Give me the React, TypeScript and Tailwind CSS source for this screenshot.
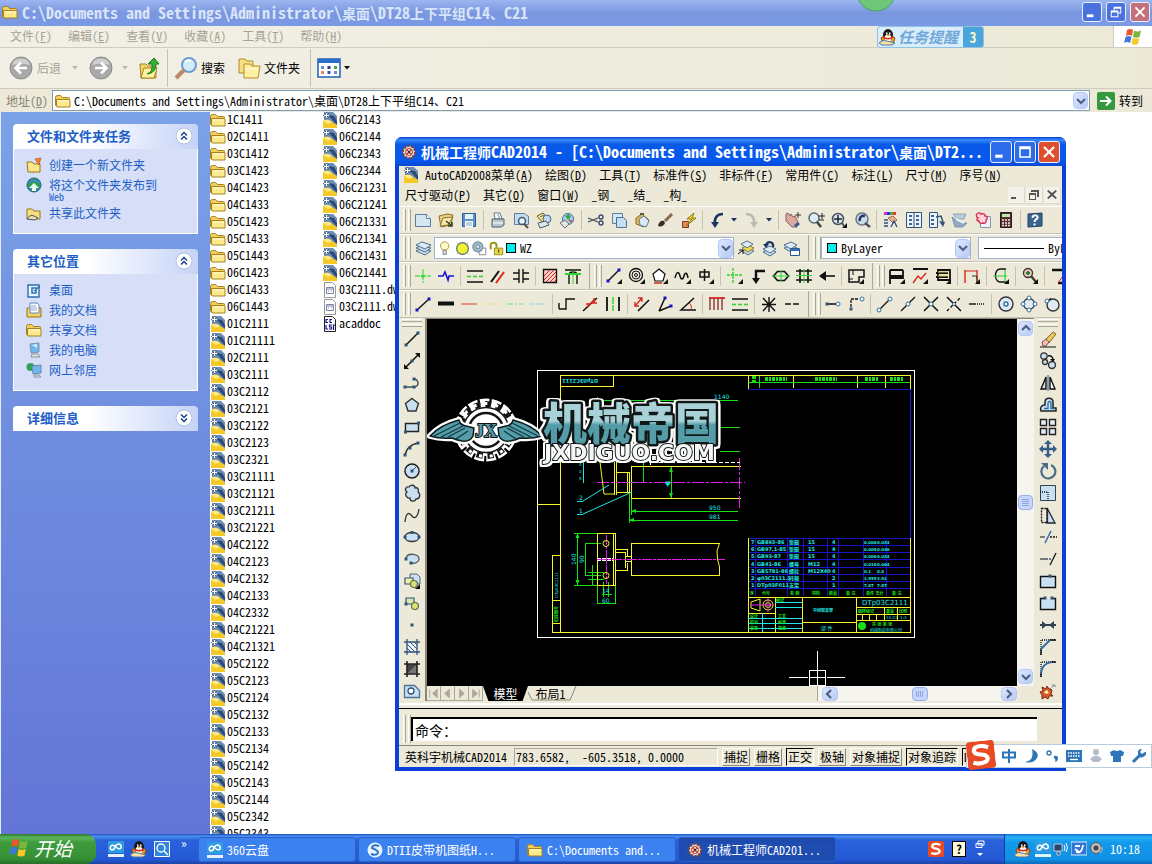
import React from "react";

type Shape = [d: string, stroke: string, fill?: string, width?: number, dash?: string];

const cir = (x: number, y: number, r: number) => `M${x - r} ${y}a${r} ${r} 0 1 0 ${2 * r} 0a${r} ${r} 0 1 0 ${-2 * r} 0`;
const box = (x: number, y: number, w: number, h: number) => `M${x} ${y}h${w}v${h}h${-w}z`;
const K = "#111111";
const N = "#2f5578";
const P = "#c9dff2";
const G = "#2fd42f";
const R = "#d8261c";
const B = "#1414d0";
const CORNER: Shape = ["M17 12v5h-5z", "none", K];
const dot = (x: number, y: number, c = N): Shape => [box(x - 1.5, y - 1.5, 3, 3), "none", c];

const ICONS: Record<string, Shape[]> = {
  new: [["M1.500 3.500h11l4 4v8h-15z", "#5b7f9f", "#d5e6f3"], ["M12.500 3.500v4h4", "#5b7f9f", "#fff"]],
  open: [["M2 5l8-2 6 1-2 10-10 2z", "#8a7430", "#e6cf7a"], ["M3 15l3-8 10-1-5 8z", "#8a7430", "#f6e8a8"], ["M9 10l6 5m0-4v4h-4", "#3b3b28", "none", 1.5]],
  save: [[box(2.5, 2.5, 13, 13), "#2c5f96", "#5d94c8"], [box(5, 3, 8, 5), "none", "#e8f2fb"], [box(5, 10, 8, 6), "none", "#fff"], ["M6 12h6M6 14h6", "#7aa0c4"]],
  print: [["M5 2h6l2 6H6z", "#6a7580", "#fff"], ["M3 8h12v6l-3 2H3z", "#4e5c6c", "#b9c6d3"], ["M4 12h10", "#fff"], ["M8 4h2M9 6h2", "#6e8cc0"]],
  preview: [["M2.500 2.500h10l4 3v8h-14z", "#5b7f9f", "#c3dbee"], [cir(10, 10, 3.5), "#3f5870", "#e9f4ff", 1.5], ["M12 13l4 4", "#5d4a33", "none", 2]],
  publish: [["M2 5l6-3 5 5-6 4z", "#6d5c20", "#ffe36e"], [cir(12, 8, 4), "#4a6a8c", "#bcd7ee"], ["M3 12l8-2 3 4-9 3z", "#4a5a6c", "#dfe7ee"], ["M5 6l4-2", "#3a68c0"]],
  globe: [[cir(10, 8, 5.5), "#3b6d98", "#a9d5e8"], ["M7 5l4-2 2 3-3 3z", "none", "#3ca34f"], ["M2 12l5-3 4 4-4 4z", "#6d6d6d", "#e2e6ea"], ["M11 9l3 2", "#c24a4a", "none", 2]],
  cut: [["M1 7l10 4M1 11l10-4", "#3d4a58", "none", 1.3], [cir(14, 6, 2), "#3a4b70", "none", 1.4], [cir(14, 12, 2), "#3a4b70", "none", 1.4]],
  copy: [[box(2.5, 2.5, 10, 10), "#5b7f9f", "#d7e8f6"], ["M6.500 6.500h7l3 3v7h-10z", "#4d7396", "#c6def2"]],
  paste: [["M3 7l6-4 7 6-5 7-8-3z", "#8d6a1e", "#e8b94b"], ["M6 8l5-3 5 5-3 6-6-2z", "#5b7f9f", "#dbeaf6"], ["M7 3h4", "#555", "none", 2]],
  brush: [["M2 15c1-5 4-6 6-5l1 2c-1 3-4 4-7 3z", "none", "#3b2b20"], ["M9 10l7-7", "#8a6c4d", "none", 3]],
  match: [["M3.500 10.500h6v6h-6z", "#7a3b20", "#ec8455"], ["M15 2l-7 6h5l-6 7 10-8h-4z", "#8d7a14", "#f2d52c"]],
  undo: [["M15 3C9 3 6 7 7 13", "#1c3460", "none", 2.6], ["M3 11l8 0-4 6z", "none", "#1c3460"]],
  redo: [["M3 3C9 3 12 7 11 13", "#bdbab0", "none", 2.6], ["M7 11l8 0-4 6z", "none", "#bdbab0"]],
  pan: [["M2 3l2-1 2 3 1-2 2 3 2-1 3 6-3 5-3 0-6-6z", "#8a5e5e", "#dba9a2"], ["M10 14l4-3 2 2-4 4z", "none", "#3e5d80"], ["M14 1v6M11 4h6", "#333"]],
  zoom: [[cir(7, 7, 5), "#5d6872", "#dcecf8", 1.5], ["M10 11l4 5", "#3f3f44", "none", 2.5], ["M15 2v6M12 5h6M12 9h5", "#222"]],
  zoomwin: [[cir(8, 8, 5.5), "#48535e", "#d8e8f4", 1.5], ["M8 4v8M4 8h8", "#222", "none", 1.5], ["M12 12l2 3", "#48535e", "none", 2], CORNER],
  zoomprev: [[cir(9, 8, 6), "#6a7580", "#c9dcea", 1.5], ["M12 5C8 4 6 7 7 10", "#1c3460", "none", 2.5], ["M12 12l5 4", "#48535e", "none", 2.5]],
  props: [[box(2, 1, 3, 3), "none", "#c3c"], [box(5, 1, 3, 3), "none", "#33d"], [box(8, 1, 3, 3), "none", "#3b3"], [box(11, 1, 3, 3), "none", "#e33"], ["M6 7l5-2 4 4-4 3z", "#a06a50", "#eab48a"], ["M2 9h4M2 12h4M2 15h4M9 16l3-6 3 6", "#2d4d8a", "none", 1.3]],
  grid: [[box(1.5, 1.5, 15, 15), "#33557d", "#eaf3fb"], ["M9 1v16", "#33557d"], ["M4 4h3v2h-3zM4 8h3v2h-3zM4 12h3v2h-3zM11 4h3v2h-3zM11 8h3v2h-3zM11 12h3v2h-3z", "none", "#3f6693"]],
  tools: [[box(1.5, 1.5, 8, 15), "#33557d", "#eaf3fb"], ["M3 4h3v2h-3zM3 8h3v2h-3zM3 12h3v2h-3z", "none", "#3f6693"], ["M8 6l5-1 2 6", "#33557d", "none", 1.5], ["M11 10l6 1-2 5z", "none", "#33557d"]],
  sheet: [["M2 3h13l-2 5H6z", "#8fa3b6", "#b9ccdc"], ["M1 6l8 6 7 0-4 4H4z", "#7e93a6", "#90aabf"], ["M5 8l8 4", "#e9f0f6", "none", 2]],
  markup: [[box(6.5, 5.5, 10, 11), "#8296aa", "#eef4fa"], ["M3 3c1-2 4-1 4 0 2-1 4 0 4 2 3 0 3 3 1 4 1 2-1 4-3 3-2 1-4 0-4-2-2 0-3-2-1-3-2-1-2-3-1-4z", "#d83050", "#ffd5de", 1.4]],
  calc: [[box(3.5, 1.5, 11, 15), "#1e1e1e", "#5b2c2c"], [box(5, 3, 8, 3), "none", "#bce8b0"], ["M5 9h2M8 9h2M11 9h2M5 12h2M8 12h2M11 12h2M5 14.500h2M8 14.500h2M11 14.500h2", "#f0e8e8", "none", 1.6]],
  help: [["M2 3l14-1v13l-14 1z", "#1f3f66", "#3a668f"], ["M6.500 7c0-4 6-3 5 0-1 2-3 1-3 4M8.500 12.500v2", "#fff", "none", 2]],
  layers: [["M2 12l6-3 9 3-6 4z", "#4d6f90", "#c9dcec"], ["M2 9l6-3 9 3-6 4z", "#4d6f90", "#c9dcec"], ["M2 6l6-3 9 3-6 4z", "#4d6f90", "#dfeaf5"]],
  layerSet: [["M5 12l6-3 6 3-6 4z", "#4d6f90", "#c9dcec"], ["M5 9l6-3 6 3-6 4z", "#8a7420", "#f2dd60"], ["M4 5l6-3 6 3-6 4z", "#4d6f90", "#dfeaf5"], ["M1 15l5-4M2 11h4v4", K]],
  layerPrev: [["M3 13l7-3 6 3-6 4z", "#4d6f90", "#c9dcec"], ["M3 10l7-3 6 3-6 4z", "#4d6f90", "#dfeaf5"], ["M13 8C14 3 8 1 6 6", "#1c3460", "none", 2.3], ["M3 5h6l-3 4z", "none", "#1c3460"]],
  layerState: [["M1 9l7-3 6 3-6 4z", "#4d6f90", "#c9dcec"], ["M1 6l7-3 6 3-6 4z", "#4d6f90", "#dfeaf5"], [box(7.5, 9.5, 9, 7), "#2d5a90", "#fff"], [box(8, 10, 8, 2), "none", "#2d6ac0"]],
  bulb: [[cir(8, 6, 5), "#a08c30", "#fff9c8"], ["M6 11h4v5H6z", "#777", "#ddd"]],
  sun: [[cir(9, 9, 7), "#4a6a7a", "#f2f230", 1.4], ["M2 2l2 2M16 2l-2 2M2 16l2-2M16 16l-2-2", "#c8b820"]],
  sunvp: [[box(8.5, 8.5, 8, 8), "#777", "#fff"], [cir(7, 7, 6), "#6f8fa4", "#a8bdcb", 1.4], [cir(7, 7, 2.5), "#5d7d92", "#cfdde6"]],
  lock: [["M2 10V5c0-4 7-4 7 0v3", "#a09418", "none", 2.5], [box(6.5, 8.5, 10, 8), "#8a8014", "#e8d840"], ["M11.500 10v4", "#555", "none", 1.5]],
  cross: [["M9 2v14M1 9h16", "#55dd55", "none", 1.3, "5 1"], dot(9, 9, G)],
  wave: [["M1 9h5l2-4 3 8 1-4h5", B, "none", 1.6]],
  eq: [["M1 4h16M1 15h16", K, "none", 1.4], ["M1 9.500h16", G, "none", 1.4, "4 2"]],
  slash: [["M2 15L10 4", K, "none", 2], ["M7 16l8-11", R, "none", 2]],
  gap: [["M1 6h6M1 12h6M11 6h6M11 12h6M7 2v14M11 2v14", K, "none", 1.4]],
  hatch: [[box(2.5, 2.5, 13, 13), K, "#f7d0cc", 1.3], ["M3 9l6-6M3 13l10-10M5 15l10-10M9 15l6-6M13 15l2-2", R]],
  arch: [["M1 3h16M5 17V8c0-4 8-4 8 0v9", K, "none", 1.4], ["M1 7h16", G, "none", 2], ["M9 4v13", G]],
  line: [["M3 15L15 4", K, "none", 1.4], dot(3, 15, B), dot(15, 4, B)],
  lineC: [["M3 14L14 3", K, "none", 1.4], dot(3, 14, B), dot(14, 3, B), CORNER],
  rings: [[cir(8, 8, 6.5), K, "none", 1.3], [cir(8, 8, 4), K], [cir(8, 8, 1.5), K], CORNER],
  pent: [["M8 2l6 5-2 7H4L2 7z", K, "#fff", 1.2], ["M3 16h8", R, "none", 1.5], CORNER],
  squig: [["M1 11c2-8 4-6 5-2s3 4 4 0 3-4 4 2", K, "none", 1.5], CORNER],
  ctr: [[box(3, 5, 9, 5), K, "none", 1.5], ["M7.500 2v12", K, "none", 1.5], CORNER],
  crossC: [["M7 1v15M1 8h15", G, "none", 1.4, "3 1"], CORNER],
  leader: [["M16 4H7v9", K, "none", 2.4], ["M3 11h8l-4 6z", "none", K]],
  hexa: [["M1.500 9l4-4.500h7l4 4.500-4 4.500h-7z", K, "none", 1.7], ["M0 9h18M9 3v12", G]],
  beam: [["M1 4h16M1 13h16M5 2v14M13 2v14", K, "none", 1.6], ["M9 2v14M1 8.500h16", G]],
  arrowL: [["M17 9H5", K, "none", 1.6], ["M1 9l7-5v10z", "none", K]],
  panel: [["M2 3h15v7h-5v5H2z", K, "none", 1.5], ["M6 3v5M2 12h4", K], CORNER],
  shelf: [["M2 3v14M15 3v9M2 3h13M2 9h13M2 11h13", K, "none", 1.8], CORNER],
  roof: [["M2 2h15", K, "none", 2], ["M2 16l5-7 3 3 5-6", R, "none", 1.4], CORNER],
  book: [["M4 3h12v10H4zM2 6h12M2 10h12M4 13h12", K, "none", 1.8], ["M4 5h10M4 9h10", "#d8c040"], CORNER],
  dimR: [["M2 3v13M14 3v13", R, "none", 1.4], ["M2 4h12", R], ["M9 9h5v7", "#333"], CORNER],
  fork: [["M14 2H8C2 3 2 14 8 15h8", K, "none", 1.3], ["M1 9h14M13 3v12", G, "none", 1.2], CORNER],
  find: [[cir(7, 6, 4.5), "#333", "#f3c0c0", 1.3], ["M5 6h4M7 4v4", "#1a8a2a", "none", 2], ["M10 9l5 6", "#4a3a20", "none", 2.4], CORNER],
  roof2: [["M2 3h15M8 16h9", K, "none", 2.4], ["M8 16l7-10", R]],
  thick: [["M1 8.500h16", K, "none", 4]],
  red: [["M1 9h16", "#e27a70", "none", 1.6]],
  pale: [["M1 9h16", "#ece6b0", "none", 2]],
  gdash: [["M1 9h16", "#9be29b", "none", 1.6, "6 2 2 2"]],
  cdash: [["M1 9h16", "#a9e0d8", "none", 1.4, "4 1"]],
  step: [["M1 14h7V4h9M1 14V8", K, "none", 1.4]],
  brk: [["M2 16L16 3", K, "none", 1.5], ["M6 12l7-7M5 9h4M11 8h5M13 3v5", R, "none", 1.6]],
  bars: [["M3 2v14M15 2v14", K, "none", 1.8], ["M9 2v14", G, "none", 1.5, "7 1"]],
  offs: [["M5 16L16 5", K, "none", 1.6], ["M2 11L9 3M2 7v4h4M5 3h4v4", R, "none", 1.3]],
  ang: [["M3 16L9 3M3 16l12-5", K, "none", 1.5], dot(9, 3, B), dot(15, 11, B)],
  ang2: [["M15 3L2 15h15", K, "none", 1.5], ["M10 8c2 1 3 4 2 7", R]],
  comb: [["M1 3h16", R, "none", 1.8], ["M2 3v12M6 3v12M10 3v12M14 3v12", "#833", "none", 1.4]],
  star: [["M9 2v15M2 9.500h14M3 3l12 13M15 3L3 16", K, "none", 1.4]],
  dash: [["M2 9h6M10 9h6", K, "none", 1.4]],
  seg: [["M4 9h8", K, "none", 1.6], dot(3, 9), [cir(14, 9, 2), "#2f6f98", "#fff"]],
  lshape: [["M4 12V4h8", K, "none", 1.3, "3 1"], dot(4, 14), [cir(15, 4, 2), "#2f6f98", "#fff"]],
  snapE: [["M4 14L13 5", K, "none", 1.3], [cir(3, 15, 2), "#2f6f98", "#fff"], [cir(14, 4, 2), "#2f6f98", "#fff"]],
  snapM: [["M2 16L16 2", K, "none", 1.3], [cir(9, 9, 2), "#2f6f98", "#fff"]],
  snapX: [["M2 16L16 2M2 2l14 14", K, "none", 1.5], [cir(9, 9, 2), "#2f6f98", "#fff"]],
  snapA: [["M2 2l14 14", K, "none", 1.5], ["M2 16L16 2", K, "none", 1.4, "3 2"], [cir(9, 9, 1.5), "#2f6f98", "#fff"]],
  snapD: [["M1 9h7", K, "none", 1.4], ["M9 9h8", K, "none", 1.4, "1 1"]],
  snapC: [[cir(9, 9, 7), "#333", "#dfeaf4", 1.4], [cir(9, 9, 2), "#2f6f98", "#fff", 1.4]],
  snapQ: [[cir(9, 9, 5.5), "#333", "#dfeaf4", 1.3], [cir(9, 3, 2), "#2f6f98", "#fff"], [cir(9, 15, 2), "#2f6f98", "#fff"], [cir(3, 9, 2), "#2f6f98", "#fff"], [cir(15, 9, 2), "#2f6f98", "#fff"]],
  snapT: [[cir(10, 10, 6), "#333", "#dfeaf4", 1.4], ["M2 8l6-5", K], [cir(4, 6, 2), "#2f6f98", "#fff"]],
  dLine: [["M3 15L15 3", K, "none", 1.4], dot(3, 15), dot(15, 3)],
  dRay: [["M2 16L16 2", K, "none", 1.6], ["M1 17v-5l5 5zM17 1v5l-5-5z", "none", K], dot(9, 9)],
  dPoly: [["M2 13h9c6-1 5-8-1-8", "#44505c", "none", 1.4], dot(2, 13), dot(11, 13), dot(11, 5)],
  dPent: [["M9 2.500l6.500 5-2.500 7.500H5L2.500 7.500z", "#333", P, 1.4]],
  dRect: [[box(2.5, 5.5, 13, 8), "#222", P, 1.4], dot(2.5, 14), dot(15.5, 5)],
  dArc: [["M2 16C3 9 8 4 16 3", "#333", "none", 1.4], dot(2, 15), dot(7, 8), dot(15, 3)],
  dCirc: [[cir(9, 9, 7), "#222", P, 1.5], ["M9 9l4-4", N], dot(9, 9)],
  dCloud: [["M4 8C1 6 3 2 6 3c2-3 6-2 6 1 3-1 4 2 3 4 3 2 2 7-2 7-1 3-6 3-6-1-3 1-6-4-3-6z", "#333", P, 1.3]],
  dSpl: [["M2 16C3 6 6 6 9 10s6 0 7-7", "#333", "none", 1.3]],
  dEll: [["M2 9c0-6 14-6 14 0s-14 6-14 0", "#333", P, 1.3], dot(2, 9), dot(16, 9), dot(9, 4.5)],
  dEArc: [["M3 8c2-6 13-4 13 1 0 3-4 5-8 4", "#555", P, 1.3], dot(3, 9), dot(8, 13)],
  dIns: [["M7 2h7l3 3v7H7z", "#567", P], [box(2, 6, 8, 6), N, "#f2f2a0", 1.2], [cir(11, 12, 3.5), "#5c7048", "#dbe27c", 1.2], CORNER],
  dBlk: [[box(3, 4, 8, 6), N, "#d8e8b0", 1.2], [cir(12, 12, 3.5), "#5c7048", "#dbe27c", 1.2], dot(3, 10)],
  dPt: [dot(9, 9)],
  dHat: [[box(4, 4, 10, 10), "none", "#e8f1fa"], ["M4 1v16M14 1v16M1 4h16M1 14h16", N, "none", 1.3], ["M4 6l8 8M4 10l4 4M7 4l7 7M11 4l3 3", N]],
  dGrad: [[box(4, 4, 10, 10), "none", "#777"], ["M4 14V4h10z", "none", "#444"], ["M4 1v16M14 1v16M1 4h16M1 14h16", "#222", "none", 1.6]],
  dReg: [["M1.500 3.500h10l5 5v7h-15z", "#4d7396", P, 1.3], [cir(8, 9, 3), "#2d557a", "#fff", 1.3]],
  mErase: [["M6 10l8-8 3 2-7 9z", "#8a6a2a", "#e8c85c"], ["M3 12l4-3 3 3-3 4H4z", "#8a4a4a", "#f2c0b8"], ["M1 17h16", K]],
  mCopy: [[cir(5, 4, 3.2), "#333", P, 1.3], [cir(6, 10, 2.5), "#333", P, 1.3], [cir(13, 13, 3.5), "#333", P, 1.4], ["M9 4c3-1 5 1 5 4", K, "none", 1.5], ["M11 7h5l-2 3z", "none", K]],
  mMir: [["M7 3v12H2z", K, P, 1.4], ["M9 1v16", N], ["M11 3v12h5z", K, "#fff", 1.4]],
  mOff: [["M2 15h15v-3h-3V6c0-5-8-5-8 0v3c-4 0-5 3-4 6z", "#222", P, 1.5], ["M5 12.500h4V7c0-2 3-2 3 0v5.500h4", "#2f6fa8", "none", 1.3]],
  mArr: [[box(1.5, 1.5, 6, 6) + box(10.5, 1.5, 6, 6) + box(1.5, 10.5, 6, 6) + box(10.5, 10.5, 6, 6), "#222", "#e4eef7", 1.4]],
  mMove: [["M9 3v12M3 9h12", "#355f86", "none", 2.4], ["M9 0l4 4H5zM9 18l4-4H5zM0 9l4-4v8zM18 9l-4-4v8z", "none", "#355f86"]],
  mRot: [["M5 4a7 7 0 1 0 7-1", "#4b6a88", "none", 2.2], ["M2 1h7v7z", "none", "#4b6a88"]],
  mScale: [["M1.500 1.500h15v15h-15z", "#345", P], ["M1 8h8v9", K, "none", 1.3, "1 1"]],
  mStr: [["M8 2l8 15H8z", "#223", P, 1.3], [box(2.5, 2.5, 6, 14), K, "none", 1.3, "2 1"]],
  mTrim: [["M1 9h5", K], ["M11 9h7", K, "none", 1.3, "2 1"], ["M6 15l6-12", "#2f6fa8", "none", 1.5]],
  mExt: [["M1 9h6", K], ["M7 9h5", "#357", "none", 1.3, "2 1"], ["M11 15l6-12", K, "none", 1.3]],
  mBrk1: [[box(1.5, 4.5, 15, 11), K, P, 1.4], dot(11, 4)],
  mBrk2: [[box(2, 5, 14, 10), "none", P], ["M5 4.500H1.500v11h15v-11H13", K, "none", 1.4], dot(6, 4), dot(13, 4)],
  mJoin: [["M1 9h16", K, "none", 1.6], ["M3 5l5 4-5 4zM15 5l-5 4 5 4z", "none", "#29455f"]],
  mCham: [["M2 17V2h15", K, "none", 1.3, "1 1"], ["M2 17v-6M11 2h6", K, "none", 1.4], ["M2 11l9-9", "#2f6fa8", "none", 2]],
  mFil: [["M2 17V2h15", K, "none", 1.3, "1 1"], ["M2 17v-5M12 2h5", K, "none", 1.4], ["M2 13C3 6 6 3 13 2", "#2f6fa8", "none", 2]],
  mExp: [["M1 10l3-1-1-4 4 2 1-3 2 3 3 1-1 4 2 2-4 0-1 3-3-2-3 2 0-4z", "#7a2a10", "#d8582c"], ["M5 10l3-2 2 3-3 1z", "none", "#fff2a0"], ["M11 7l5-4M13 3h3v3", "#777", "none", 1, "2 1"]],
};

function Icon({ name, className = "h-[18px] w-[18px]" }: { name: string; className?: string }) {
  return (
    <svg viewBox="0 0 18 18" className={className + " shrink-0"} aria-hidden="true">
      {ICONS[name].map(([d, stroke, fill = "none", width = 1, dash], i) => (
        <path key={i} d={d} stroke={stroke} fill={fill} strokeWidth={width} strokeDasharray={dash} />
      ))}
    </svg>
  );
}

/* Bold caption whose Chinese runs are set a size smaller than its Latin runs. */
function Caption({ text }: { text: string }) {
  return (
    <span className="whitespace-pre text-[16px] leading-6 font-bold">
      {text.split(/([\u3001\u4e00-\u9fff]+)/).map((part, i) => (i % 2 ? <span key={i} className="text-[14px]">{part}</span> : part))}
    </span>
  );
}

function Label({ text, hot }: { text: string; hot: string }) {
  return <>{text}({<u>{hot}</u>})</>;
}

function Folder({ className = "h-4 w-4" }: { className?: string }) {
  return (
    <svg viewBox="0 0 16 16" className={className + " shrink-0"} aria-hidden="true">
      <path d="M.500 4.500q0-2 2-2h3l2 2h6q1 0 1 1V13H2q-1.500 0-1.500-1z" fill="#f0cf5c" stroke="#a8821e" />
      <path d="M1.500 6.500H14q1 0 1 1V14H3q-1.500 0-1.500-1z" fill="#fbe98c" stroke="#a8821e" />
      <path d="M3 8h11" stroke="#fffbd8" />
    </svg>
  );
}

function Drawing() {
  return (
    <svg viewBox="0 0 16 16" className="h-4 w-4 shrink-0" aria-hidden="true">
      <path d="M2 0h9l4 4v12H2z" fill="#6d8db4" />
      <path d="M6 3l6 1 3 5v4z" fill="#2b4a78" />
      <path d="M1 9q5-3 9 1l5 3v3H1z" fill="#f5c928" />
      <path d="M1 9q5-3 9 1l-4 2z" fill="#fdea80" />
      <path d="M1 3.500h7M4.500 0v7M2 1l5 5M7 1L2 6" stroke="#4a6488" />
      <path d="M2 3.500h5M4.500 1v5" stroke="#fff" />
    </svg>
  );
}

function Doc({ lsp }: { lsp?: boolean }) {
  return (
    <svg viewBox="0 0 16 16" className="h-4 w-4 shrink-0" aria-hidden="true">
      <path d="M2.500.500h8l3 3v12h-11z" fill="#fff" stroke={lsp ? "#222" : "#999"} />
      {lsp ? (
        <path d="M6 3.500H4v3h2M10 3.500H8v3h2M4 9v4h2M10 9H7.500v2h2v2H7M11.500 14V9H13" fill="none" stroke="#15158a" strokeWidth="1.200" />
      ) : (
        <path d="M4.500 5.500h7v6h-7zM5 7h6M6 9h1M9 9h1" fill="none" stroke="#7f82a8" />
      )}
    </svg>
  );
}

function Gear({ className = "h-4 w-4" }: { className?: string }) {
  return (
    <svg viewBox="0 0 16 16" className={className + " shrink-0"} aria-hidden="true">
      <circle cx="8" cy="8" r="6" fill="#d8d2d2" stroke="#6e4a4a" strokeWidth="3" strokeDasharray="2.200 1.500" />
      <circle cx="8" cy="8" r="4.500" fill="#d84838" stroke="#eee" />
      <path d="M5 8h6M8 5v6" stroke="#fff" strokeWidth="1.500" />
      <circle cx="8" cy="8" r="1.500" fill="#333" />
    </svg>
  );
}

function Penguin() {
  return (
    <svg viewBox="0 0 20 18" className="h-[18px] w-5 shrink-0" aria-hidden="true">
      <path d="M3 10l7-5 7 5-2 6H5z" fill="#e8a020" stroke="#7a5010" />
      <ellipse cx="10" cy="7" rx="5" ry="6" fill="#181818" />
      <ellipse cx="10" cy="10" rx="3.500" ry="3.500" fill="#fff" />
      <path d="M5 8q5 4 10 0v2q-5 3-10 0z" fill="#e02818" />
      <path d="M8 4.500h1.500v2H8zM11 4.500h1.500v2H11z" fill="#fff" />
      <path d="M8 7h4l-2 1.500z" fill="#f8b020" />
      <path d="M1 15q4-4 8-2l8 2-3 2H4z" fill="#f8e0a0" stroke="#487ab0" />
    </svg>
  );
}

function Flag({ className }: { className: string }) {
  return (
    <svg viewBox="0 0 20 18" className={className} aria-hidden="true">
      <path d="M4 2q3-2 6 0L9 8Q6 6 3 8z" fill="#e8582c" />
      <path d="M11 2.500q3 2 7 0L16.500 9q-3 1.500-6.500 0z" fill="#78b83c" />
      <path d="M2.500 9q3-2 6 0L7 15q-3-2-6 0z" fill="#3f78d8" />
      <path d="M9.700 10q3 1.500 6.500 0L15 16q-3 1.500-6.500 0z" fill="#f8c828" />
    </svg>
  );
}

function Cloud() {
  return (
    <svg viewBox="0 0 16 16" className="h-4 w-4 shrink-0" aria-hidden="true">
      <path d="M0 0h16v12H0z" fill="#2f9be0" />
      <path d="M0 13h16v3H0z" fill="#e4f2fc" />
      <path d="M4 9q-3-1-1-4 2-2 5 1 3 3 5 1 1-3-2-4-3 0-4 3-1 3-3 3z" fill="none" stroke="#fff" strokeWidth="1.500" />
    </svg>
  );
}

function SBadge({ className = "h-4 w-4" }: { className?: string }) {
  return (
    <svg viewBox="0 0 16 16" className={className + " shrink-0"} aria-hidden="true">
      <rect width="16" height="16" rx="2" fill="#e84a24" />
      <path d="M12.500 4Q8 2 5 3.500 3 6 6 7.200l4 1Q13 10 10.500 12 7 13.500 3.200 12" fill="none" stroke="#fff" strokeWidth="2.400" />
    </svg>
  );
}

function Caret({ color = "#111" }: { color?: string }) {
  return <svg viewBox="0 0 6 4" className="h-1 w-1.5 shrink-0" aria-hidden="true"><path d="M0 0h6L3 3.500z" fill={color} /></svg>;
}

const CHEVRON: Record<string, string> = { up: "M2 7l4-4 4 4", down: "M2 4l4 4 4-4", left: "M7 2L3 6l4 4", right: "M4 2l4 4-4 4" };

function Arrow({ dir, className = "h-[15px] w-[15px]" }: { dir: string; className?: string }) {
  return (
    <button aria-label={"Scroll " + dir} className={className + " flex shrink-0 items-center justify-center rounded-sm border border-[#b4c8f6] bg-gradient-to-br from-[#dce6fe] to-[#b9cbf6]"}>
      <svg viewBox="0 0 12 12" className="h-3 w-3" aria-hidden="true"><path d={CHEVRON[dir]} fill="none" stroke="#4d6185" strokeWidth="2.200" /></svg>
    </button>
  );
}

const CAPTION_PATHS: Record<string, string> = {
  min: "M4 12h7v3H4z",
  max: "M4 4h11v11H4zm1.500 3v6.500h8V7z",
  restore: "M7 4h8v7h-3v4H4V8h3zm1 2v2h4v2h2V6zM5 10v4h6v-4z",
  close: "M4 5.400L5.400 4 9.500 8.100 13.600 4 15 5.400 10.900 9.500 15 13.600 13.600 15 9.500 10.900 5.400 15 4 13.600 8.100 9.500z",
};

function CaptionButton({ kind, className }: { kind: string; className: string }) {
  return (
    <button aria-label={kind} className={className + " shrink-0 rounded-[3px] border border-[#e8eefc]"}>
      <svg viewBox="0 0 19 19" className="h-full w-full" aria-hidden="true"><path d={CAPTION_PATHS[kind]} fill="#fff" fillRule="evenodd" /></svg>
    </button>
  );
}

const FOLDERS = "1C1411 02C1411 03C1412 03C1423 04C1423 04C1433 05C1423 05C1433 05C1443 06C1423 06C1433 06C1443".split(" ");
const DRAWINGS = "01C2111 01C21111 02C2111 03C2111 03C2112 03C2121 03C2122 03C2123 03C2321 03C21111 03C21121 03C21211 03C21221 04C2122 04C2123 04C2132 04C2133 04C2332 04C21221 04C21321 05C2122 05C2123 05C2124 05C2132 05C2133 05C2134 05C2142 05C2143 05C2144 05C2342 05C2343 06C2143 06C2144 06C2343 06C2344 06C21231 06C21241 06C21331 06C21341 06C21431 06C21441".split(" ");

function FileItem({ icon, name }: { icon: React.ReactNode; name: string }) {
  return <li className="h-[17px]"><button className="flex items-start gap-px whitespace-nowrap leading-[14px]">{icon}{name}</button></li>;
}

function FileList() {
  return (
    <ul className="grid min-w-0 flex-1 auto-cols-[112px] grid-flow-col grid-rows-[repeat(43,17px)] content-start overflow-hidden bg-white">
      {FOLDERS.map((f) => <FileItem key={f} icon={<Folder />} name={f} />)}
      {DRAWINGS.map((f) => <FileItem key={f} icon={<Drawing />} name={f} />)}
      <FileItem icon={<Doc />} name="03C2111.dwl" />
      <FileItem icon={<Doc />} name="03C2111.dwl2" />
      <FileItem icon={<Doc lsp />} name="acaddoc" />
    </ul>
  );
}

function Panel({ title, open, children }: { title: string; open?: boolean; children?: React.ReactNode }) {
  return (
    <section>
      <button className="flex h-[25px] w-full items-center justify-between rounded-t-[4px] bg-gradient-to-r from-white from-40% to-[#c6d3f7] pr-1 pb-px pl-3.5 text-[13px] font-bold text-[#215dc6]">
        {title}
        <svg viewBox="0 0 20 20" className="h-5 w-5" aria-hidden="true">
          <circle cx="10" cy="10" r="8" fill="#fff" stroke="#b0bfe0" />
          <path d={open ? "M7 9.500l3-3 3 3M7 13.500l3-3 3 3" : "M7 6.500l3 3 3-3M7 10.500l3 3 3-3"} fill="none" stroke="#1a3f90" strokeWidth="1.500" />
        </svg>
      </button>
      {open && <div className="border border-t-0 border-white bg-[#d6dff7] pl-3 text-[#215dc6]">{children}</div>}
    </section>
  );
}

const PLACES: Record<string, React.ReactNode> = {
  desk: <><path d="M2 3h11v12H2z" fill="#eaf4fc" stroke="#2a6fb0" strokeWidth="1.400" /><path d="M6 6h4v5H6zM8 9l6-5" fill="none" stroke="#2a6fb0" strokeWidth="1.500" /></>,
  docs: <><path d="M1 6h14v9H1z" fill="#f2d368" stroke="#9a7416" /><path d="M4 1h7l2 2v8H4z" fill="#fff" stroke="#5c88b8" /><path d="M5 4h5M5 6h6M5 8h6" stroke="#88a8d0" /></>,
  pc: <><path d="M4 2l9-1v9l-8 1z" fill="#6fb8ee" stroke="#7d93aa" /><path d="M6 3l5-1v4z" fill="#d5eefd" /><path d="M6 12h6l2 3H5z" fill="#dfe4ea" stroke="#8a94a0" /></>,
  net: <><circle cx="4.500" cy="5" r="4" fill="#34a060" /><path d="M6 4l9-1v8l-8 1z" fill="#6fb8ee" stroke="#6d88a8" /><path d="M8 13h5l2 2H8z" fill="#dfe4ea" stroke="#8a94a0" /></>,
  web: <><circle cx="8" cy="8" r="7" fill="#2f9c50" stroke="#1f5f90" /><path d="M2 6q6-5 12 0M3 12q5-2 10 0" fill="none" stroke="#3b86d0" strokeWidth="2" /><path d="M3 11l5-5 5 5h-3v3H6v-3z" fill="#e8fbe8" /></>,
  share: <><path d="M1 4h5l2 2h6v8H1z" fill="#f6df80" stroke="#9a7416" /><path d="M1 14q3-5 7-3l4 2-3 2z" fill="#f8d8b0" stroke="#3a5a70" /></>,
  create: <><path d="M1 5h5l2 2h6v8H2z" fill="#fbe98c" stroke="#9a7416" /><path d="M9 2l6-1-2 7z" fill="#f08030" stroke="#b05010" strokeWidth=".600" /></>,
};

function Place({ icon, children }: { icon?: string; children: React.ReactNode }) {
  return (
    <li>
      <a href="#" className="flex items-start gap-[7px]">
        {icon ? <svg viewBox="0 0 16 16" className="mt-0.5 h-4 w-4 shrink-0" aria-hidden="true">{PLACES[icon]}</svg> : <Folder className="mt-0.5 h-4 w-4" />}
        <span className="py-0.5">{children}</span>
      </a>
    </li>
  );
}

function Sidebar() {
  return (
    <aside className="flex w-[210px] shrink-0 flex-col gap-[15px] overflow-hidden border-l border-[#e4ebfb] bg-gradient-to-b from-[#7ba2e7] to-[#6375d6] py-3 pr-3 pl-3">
      <Panel title="文件和文件夹任务" open>
        <ul className="flex flex-col pt-1.5 pb-2.5 leading-4">
          <Place icon="create">创建一个新文件夹</Place>
          <Place icon="web">将这个文件夹发布到<br /><span className="block text-[10px] leading-2">Web</span></Place>
          <Place icon="share">共享此文件夹</Place>
        </ul>
      </Panel>
      <Panel title="其它位置" open>
        <ul className="flex flex-col pt-1.5 pb-2.5 leading-4">
          <Place icon="desk">桌面</Place>
          <Place icon="docs">我的文档</Place>
          <Place>共享文档</Place>
          <Place icon="pc">我的电脑</Place>
          <Place icon="net">网上邻居</Place>
        </ul>
      </Panel>
      <Panel title="详细信息" />
    </aside>
  );
}

function Round({ flip }: { flip?: boolean }) {
  return (
    <svg viewBox="0 0 24 24" className="h-6 w-6 shrink-0" aria-hidden="true">
      <circle cx="12" cy="12" r="11" fill="#a9a9a9" stroke="#8c8c8c" />
      <path d="M3 9a9.500 9.500 0 0 1 18 0q-9-3-18 0z" fill="#cfcfcf" />
      <path d={flip ? "M6 12h11M12 6.500l5.500 5.500-5.500 5.500" : "M18 12H7M12 6.500L6.500 12l5.500 5.500"} fill="none" stroke="#fff" strokeWidth="2.600" />
    </svg>
  );
}

const EXPLORER_MENU = [["文件", "F"], ["编辑", "E"], ["查看", "V"], ["收藏", "A"], ["工具", "T"], ["帮助", "H"]];

function ExplorerChrome() {
  return (
    <header className="relative shrink-0 bg-[#ece9d8]">
      <div className="flex h-[26px] items-center gap-1 bg-gradient-to-b from-[#9cb6f0] via-[#7a96df] to-[#7b9ae6] px-0.5 pb-0.5 text-[#d8e4f8]">
        <Folder />
        <Caption text={"C:\\Documents and Settings\\Administrator\\桌面\\DT28上下平组C14、C21"} />
        <span className="ml-auto flex gap-1">
          <CaptionButton kind="min" className="h-5 w-5 bg-[#4a72de]" />
          <CaptionButton kind="restore" className="h-5 w-5 bg-[#4a72de]" />
          <CaptionButton kind="close" className="h-5 w-5 bg-[#c4707a]" />
        </span>
      </div>
      <div className="flex h-[22px] border-b border-[#d0cdbd] bg-gradient-to-r from-[#f2f0e6] to-[#ece9d8]">
        <nav className="flex flex-1 items-center gap-4 pb-px pl-2.5 text-[#a5a294]">
          {EXPLORER_MENU.map(([t, h]) => <button key={h}><Label text={t} hot={h} /></button>)}
        </nav>
        <div className="flex w-[39px] items-center justify-center border-l border-[#d0cdbd] bg-white"><Flag className="h-[18px] w-5" /></div>
      </div>
      <div className="flex h-[41px] items-center border-b border-[#cfccbc] bg-gradient-to-r from-[#f2f0e6] to-[#ece9d8] pl-[9px]">
        <button className="flex items-center gap-1 text-[#a5a294]"><Round />后退</button>
        <span className="flex w-[28px] justify-center"><Caret color="#bbb8aa" /></span>
        <button aria-label="前进"><Round flip /></button>
        <span className="flex w-6 justify-center"><Caret color="#bbb8aa" /></span>
        <button aria-label="向上" className="w-[30px]">
          <svg viewBox="0 0 24 24" className="h-6 w-6"><path d="M3 8h6l2 2h8v12H4z" fill="#f3d868" stroke="#a8821e" /><path d="M4 22l3-10h13l-3 10z" fill="#fdf0a0" stroke="#a8821e" /><path d="M10 18q6-2 5-10h-4l6-6 5 6h-3q0 9-9 10z" fill="#35b035" stroke="#1a7a1a" /></svg>
        </button>
        <span className="h-[38px] w-[7px] border-l border-[#c5c2b2]" />
        <button className="flex items-center gap-[3px]">
          <svg viewBox="0 0 24 24" className="h-6 w-6"><circle cx="15" cy="9" r="7" fill="#d3ebfc" stroke="#6c9ccc" strokeWidth="2" /><path d="M11 6q3-3 6-1" fill="none" stroke="#fff" strokeWidth="2" /><path d="M10 14l-8 8" stroke="#b88a68" strokeWidth="4" /></svg>
          搜索
        </button>
        <button className="ml-3 flex items-center gap-[3px]">
          <svg viewBox="0 0 24 24" className="h-6 w-6"><path d="M2 3h6l2 2h6v12H2z" fill="#f6df80" stroke="#b08c2c" /><path d="M7 8h6l2 2h8l-2 12H7z" fill="#fdf0a0" stroke="#b08c2c" /><path d="M8 13h13" stroke="#fffbe0" /></svg>
          文件夹
        </button>
        <span className="ml-[10px] h-[38px] w-[7px] border-l border-[#c5c2b2]" />
        <button className="flex items-center gap-[3px]" aria-label="查看方式">
          <svg viewBox="0 0 24 20" className="h-5 w-6"><path d="M1 1h22v18H1z" fill="#fff" stroke="#1e5fb4" strokeWidth="1.500" /><path d="M1 1h22v4H1z" fill="#2d6fc8" /><path d="M4 8h3v3H4zM17 13h3v3h-3z" fill="#6a8ad0" /><path d="M10.500 8h3v3h-3z" fill="#303890" /><path d="M17 8h3v3h-3z" fill="#48a048" /><path d="M4 13h3v3H4z" fill="#e08850" /><path d="M10.500 13h3v3h-3z" fill="#2858c0" /></svg>
          <Caret />
        </button>
      </div>
      <div className="flex h-[23px] items-center pl-1.5">
        <label htmlFor="address" className="w-[46px] text-[#8a8778]"><Label text="地址" hot="D" /></label>
        <div className="flex h-[21px] flex-1 items-center gap-[3px] border border-[#7f9db9] bg-white pl-0.5">
          <Folder />
          <input id="address" defaultValue={"C:\\Documents and Settings\\Administrator\\桌面\\DT28上下平组C14、C21"} className="min-w-0 flex-1 bg-transparent outline-none" />
          <Arrow dir="down" className="mr-px h-[17px] w-[15px]" />
        </div>
        <button className="ml-[7px] flex w-[55px] items-center gap-1">
          <svg viewBox="0 0 18 18" className="h-[18px] w-[18px]"><rect width="18" height="18" rx="2" fill="#36983c" /><path d="M3 9h10M9 4.500L13.500 9 9 13.500" fill="none" stroke="#fff" strokeWidth="2" /></svg>
          转到
        </button>
      </div>
      <div className="absolute top-[26px] left-[877px] flex h-[22px] w-[107px] items-center overflow-hidden rounded-[3px] border border-[#8fc0e0] bg-[#d9edfa] text-[15px] font-bold text-[#6fa8d8] italic">
        <Penguin /><span className="flex-1 whitespace-nowrap leading-5">任务提醒</span>
        <span className="w-5 bg-[#4ba5dc] text-center text-[14px] leading-5 text-[#f6f6c8] not-italic">3</span>
      </div>
      <svg viewBox="0 0 40 12" className="absolute top-0 left-[856px] h-3 w-10" aria-hidden="true"><circle cx="20" cy="-8" r="19" fill="#6cc878" stroke="#4aa068" /></svg>
    </header>
  );
}

const Grip = () => <span className="my-0.5 ml-1 flex w-2 shrink-0 gap-0.5 self-stretch"><i className="w-[3px] border-r border-l border-r-[#aca899] border-l-white" /><i className="w-[3px] border-r border-l border-r-[#aca899] border-l-white" /></span>;
const Break = () => <><span className="w-1.5 shrink-0 self-stretch border-r border-[#aca899]" /><Grip /></>;

/* "|" separates groups, "/" starts a new bar, "v" is a drop-down mark. */
function Tools({ items }: { items: string }) {
  return (
    <>
      {items.split(" ").map((n, i) =>
        n === "|" ? <span key={i} className="flex h-5 w-1.5 shrink-0 justify-center"><i className="w-px bg-[#c5c2b2]" /></span>
        : n === "/" ? <Break key={i} />
        : n === "v" ? <span key={i} className="flex w-3 shrink-0 justify-center"><Caret color="#1c3460" /></span>
        : <button key={i} aria-label={n} className="flex w-[23px] shrink-0 justify-center"><Icon name={n} /></button>,
      )}
    </>
  );
}

const Bar = ({ children }: { children: React.ReactNode }) => <div className="flex h-7 shrink-0 items-center overflow-hidden border-t border-b border-t-white border-b-[#c5c2b2]"><Grip />{children}</div>;

function Select({ value, name, className, children }: { value: string; name: string; className: string; children?: React.ReactNode }) {
  return (
    <div className={className + " flex h-[22px] shrink-0 items-center border border-[#9fb4cc] bg-white pl-[3px]"}>
      {children}
      <select aria-label={name} className="min-w-0 flex-1 appearance-none bg-transparent pl-1 outline-none"><option>{value}</option></select>
      <Arrow dir="down" className="h-[19px] w-[15px]" />
    </div>
  );
}

const CAD_MENU = [["AutoCAD2008菜单", "A"], ["绘图", "D"], ["工具", "T"], ["标准件", "S"], ["非标件", "F"], ["常用件", "C"], ["标注", "L"], ["尺寸", "M"], ["序号", "N"]];
const CAD_MENU2 = [["尺寸驱动", "P"], ["其它", "O"], ["窗口", "W"]];
const DRAW_TOOLS = "dLine dRay dPoly dPent dRect dArc dCirc dCloud dSpl dEll dEArc dIns dBlk dPt dHat dGrad dReg".split(" ");
const MODIFY_TOOLS = "mErase mCopy mMir mOff mArr mMove mRot mScale mStr mTrim mExt mBrk1 mBrk2 mJoin mCham mFil mExp".split(" ");

const SideTools = ({ items, className }: { items: string[]; className: string }) => (
  <div className={className + " flex shrink-0 flex-col items-center overflow-hidden"}>
    <span className="my-px flex h-2 w-5 shrink-0 flex-col gap-0.5"><i className="h-[3px] border-t border-b border-t-white border-b-[#aca899]" /><i className="h-[3px] border-t border-b border-t-white border-b-[#aca899]" /></span>
    {items.map((n) => <button key={n} aria-label={n} className="flex h-[22px] shrink-0 items-center"><Icon name={n} /></button>)}
  </div>
);

const PARTS = [
  ["7", "GB893-86", "垫圈", "15", "4", "0.006", "0.024"],
  ["6", "GB97.1-85", "垫圈", "15", "4", "0.009", "0.036"],
  ["5", "GB93-87", "垫圈", "15", "4", "0.006", "0.024"],
  ["4", "GB41-86", "螺母", "M12", "4", "0.016", "0.064"],
  ["3", "GB5781-86", "螺栓", "M12X40", "4", "0.1", "0.4"],
  ["2", "φ03C2111.1", "托辊", "", "2", "1.955", "3.91"],
  ["1", "DTp03F011", "支架", "", "1", "7.87", "7.87"],
];
const PART_X = [751, 757, 789, 808, 832, 864, 877];

function Model() {
  const C = "#20e8e8";
  const Y = "#f5f52a";
  const g = "#18e018";
  const M = "#e020e0";
  return (
    <svg viewBox="427 319 590 367" preserveAspectRatio="xMinYMin slice" className="block h-full w-full" fill="none" fontFamily="'DejaVu Sans', 'Noto Sans CJK SC', sans-serif" fontSize="6" aria-hidden="true">
      <g shapeRendering="crispEdges">
        <path d="M537.500 370.500h377v267h-377z" stroke="#fff" />
        <path d="M560.500 375.500h350v257h-350zM560 386.500h53v-11M537 504.500h23M560 555.500h-8v77h8M552 600.500h8M552 623.500h8M748.500 375v14h162M793.500 375v13M857.500 375v13M885.500 375v13" stroke={Y} />
        <path d="M748 382.500h162M759.500 376v12" stroke={g} />
        <path d="M748 389.500h162v148M749 538.500h161M749 545.500h161M749 552.500h161M749 559.500h161M749 567.500h161M749 574.500h161M749 581.500h161M749 588.500h161M755.500 538v58M787.500 538v58M803.500 538v58M827.500 538v58M838.500 538v58M863.500 538v58M886.500 538v58" stroke="#1616c8" />
        <path d="M748.500 538v94M748 597.500h162M775.500 597v35M802.500 597v35M856.500 597v35M802 622.500h54M856 607.500h54M856 614.500h54M856 620.500h54M748 613.500h27M862.500 614v6M869.500 614v6M876.500 614v6M884.500 608v12M897.500 608v12" stroke={Y} />
        <path d="M775 602.500h27M775 607.500h27M748 618.500h54M748 623.500h54M748 628.500h54M762.500 613v19" stroke={C} />
        <path d="M753.500 376v6M765 379h22M815 379h22M865 379h14M890 379h14" stroke={g} strokeWidth="4" strokeDasharray="3 1 2 1" />
        <path d="M597 400.500h141M740 427.500h-20M720 451.500h20M597.500 397v15M671.500 467v31M631 511.500h107M629 520.500h109M631.500 497v18M629.500 493v30M643.500 462v20M616 482.500h27" stroke={g} />
        <path d="M631.500 466.500h109M631.500 466v32h109M614.500 462v33M616.500 462v33M616 472.500h13v20h-13M627.500 472v20" stroke={Y} />
        <path d="M597 482.500h148M739.500 458v50" stroke={M} strokeDasharray="12 2 3 2" />
        <path d="M650 465v-3h90" stroke="#fff" strokeDasharray="4 2" />
        <path d="M583.500 461v22M577 501.500h6M577 514.500h6" stroke={C} />
        <path d="M574 533.500h23M574 585.500h23M577.500 533v52M585.500 543v32M585 543.500h16M585 575.500h16M597.500 586v18M615.500 586v18M597 603.500h18M602 594.500h10M592.500 565v20M588 572.500h16M588 579.500h16M603.500 582v15M608.500 582v15" stroke={g} />
        <path d="M597.500 533.500h18v52h-18zM613.500 534v51M631.500 543.500h88M631.500 543v32h88M615 549.500h12v7M615 570.500h12v-8M615 552.500h10v15M625 556.500h6v5h-6" stroke={Y} />
        <path d="M597 559.500h128M606.500 535v49" stroke={M} strokeDasharray="10 1 3 1" />
        <path d="M597 558.500h16M597 560.500h16" stroke="#fff" strokeDasharray="4 1" />
      </g>
      <path d="M719.500 543q-4 8-2 16 3 8 2 16" stroke={Y} />
      <path d="M600 462l4 32h11" stroke={Y} />
      <path d="M583 501l26-16M583 514l49-22" stroke={C} />
      <circle cx="606" cy="543.500" r="3" stroke={Y} /><circle cx="606" cy="575.500" r="3" stroke={Y} />
      <path d="M631 511l5-2v4zM629 520l5-2v4zM671 467l-2 5h4zM671 498l-2-5h4zM577.500 533l-2 5h4zM577.500 585l-2-5h4z" fill={g} />
      <path d="M751 602l9-3v12l-9-3z" stroke={Y} /><circle cx="768" cy="605" r="5" stroke={Y} /><circle cx="768" cy="605" r="2.500" stroke={Y} />
      <path d="M750 605h24M768 598v14" stroke={M} />
      <g fill={C}>
        {PARTS.map((row, r) => row.map((cell, c) => cell && <text key={r + "-" + c} x={PART_X[c]} y={544 + r * 7.2} fontSize={c > 4 ? 4 : 5} fontWeight="bold">{cell}</text>))}
        <text x="714" y="399">1140</text><text x="709" y="510">950</text><text x="709" y="519">981</text><text x="665" y="485" fontSize="7" fontWeight="bold">φ</text>
        <text x="579" y="500">2</text><text x="579" y="513">1</text>
        <text x="602" y="593">14</text><text x="602" y="603">60</text>
        <text transform="translate(576 565) rotate(-90)">140</text><text transform="translate(584 563) rotate(-90)">90</text>
        <text transform="translate(558 598) rotate(-90)" fontSize="4">DTp03C2111</text>
        <text transform="rotate(180 583 381)" x="568" y="383" fontSize="5" fontWeight="bold">DTp03C2111</text>
        <text x="813" y="612" fontSize="4" fontWeight="bold">中间辊支架</text><text x="821" y="630" fontSize="5">部 件</text>
        <text x="862" y="605" fontSize="7">DTp03C2111</text><text x="886" y="619" fontSize="4">14.31</text><text x="900" y="619" fontSize="4">1:3</text>
        <text x="870" y="632" fontSize="4">机械制造有限公司</text>
        <text x="579" y="466" fontSize="4">4</text><text x="579" y="473" fontSize="4">3</text><text x="579" y="480" fontSize="4">5</text>
      </g>
      <g fill={g} fontSize="4" fontWeight="bold">
        <text x="750" y="595">序</text><text x="762" y="595">代号</text><text x="790" y="595">名 称</text><text x="812" y="595">材料</text><text x="829" y="595">数量</text><text x="846" y="595">备 注</text><text x="866" y="595">单件 总计</text><text x="892" y="595">备 注</text>
        <text x="776" y="602">标记</text><text x="750" y="618">设计</text><text x="750" y="624">校对</text><text x="750" y="630">审核</text><text x="778" y="618">工艺</text><text x="778" y="624">标准</text><text x="778" y="630">批准</text>
        <text x="858" y="613">图样标记</text><text x="886" y="613">重量</text><text x="899" y="613">比例</text><text x="872" y="626">共 张 第 张</text>
        <text transform="translate(558 622) rotate(-90)">旧底图号</text><circle cx="862" cy="626" r="4" />
      </g>
      <path d="M789 677.500h19M827 677.500h18M817.500 651v19M809.500 670.500h16v15h-16zM817.500 670v16M809 677.500h17" stroke="#fff" shapeRendering="crispEdges" />
      <g strokeLinejoin="round">
        <circle cx="486" cy="430" r="27" stroke="#fff" strokeWidth="9" strokeDasharray="9 2" />
        <circle cx="486" cy="430" r="26" fill="#fff" stroke="#151515" strokeWidth="6" strokeDasharray="6 5" />
        <circle cx="486" cy="430" r="26.500" stroke="#fff" strokeWidth="3" strokeDasharray="3 8" strokeDashoffset="-1.500" />
        <circle cx="486" cy="430" r="22.500" fill="#fff" stroke="#151515" strokeWidth="1.500" />
        <circle cx="486" cy="430" r="17" fill="#fff" stroke="#151515" strokeWidth="2.500" />
        <path d="M430 436q10-11 29-16 1 5 7 6l8 2-1 8q-3 6-11 5-6-1-10-3-12 1-22-2z" fill="#539ca8" stroke="#fff" strokeWidth="6" />
        <path d="M542 436q-10-11-29-16-1 5-7 6l-8 2 1 8q3 6 11 5 6-1 10-3 12 1 22-2z" fill="#539ca8" stroke="#fff" strokeWidth="6" />
        <path d="M430 436q10-11 29-16 1 5 7 6l8 2-1 8q-3 6-11 5-6-1-10-3-12 1-22-2zM542 436q-10-11-29-16-1 5-7 6l-8 2 1 8q3 6 11 5 6-1 10-3 12 1 22-2z" fill="#539ca8" stroke="#0d1a1c" strokeWidth="1.500" />
        <path d="M434 436l26-13M441 437l22-11M448 437l17-9M456 439l12-8M538 436l-26-13M531 437l-22-11M524 437l-17-9M516 439l-12-8" stroke="#12393f" strokeWidth="1.300" />
        <text x="486" y="437" fontSize="18" fontFamily="'Liberation Serif', serif" fontWeight="bold" textAnchor="middle" fill="#539ca8" stroke="#111" strokeWidth="2" paintOrder="stroke">JX</text>
      </g>
      <linearGradient id="sheen" x2="0" y2="1"><stop offset=".5" stopColor="#a9d2d8" /><stop offset=".56" stopColor="#539ca8" /></linearGradient>
      <g className="[filter:drop-shadow(2px_0_0_white)_drop-shadow(-2px_0_0_white)_drop-shadow(0_2px_0_white)_drop-shadow(0_-1px_0_white)]" fontWeight="900" strokeLinejoin="round" paintOrder="stroke" stroke="#101818">
        <text x="543" y="440" fontSize="44" fontFamily="'Noto Sans CJK SC', sans-serif" fill="url(#sheen)" strokeWidth="5">机械帝国</text>
        <text x="544" y="460" fontSize="22" fill="#f6f6f6" strokeWidth="2">JXDIGUO.COM</text>
      </g>
    </svg>
  );
}

const SNAPS: [string, boolean][] = [["捕捉", false], ["栅格", false], ["正交", true], ["极轴", false], ["对象捕捉", false], ["对象追踪", true], ["DYN", true]];

function CadWindow() {
  return (
    <section className="absolute top-[137px] left-[395px] flex h-[634px] w-[671px] flex-col rounded-t-[7px] bg-[#0a3fd8] px-1 pb-1">
      <div className="-mx-1 flex h-[29px] shrink-0 items-center gap-1 rounded-t-[7px] px-1.5 text-white [background:linear-gradient(#0a3fd8,#3a8cf8_10%,#0a5ae8_25%,#0558ee_80%,#0a48d0)]">
        <Gear />
        <Caption text={"机械工程师CAD2014 - [C:\\Documents and Settings\\Administrator\\桌面\\DT2..."} />
        <span className="ml-auto flex gap-0.5">
          <CaptionButton kind="min" className="h-[22px] w-[22px] bg-[#2f6cec]" />
          <CaptionButton kind="max" className="h-[22px] w-[22px] bg-[#2f6cec]" />
          <CaptionButton kind="close" className="h-[22px] w-[22px] bg-[#dc5030]" />
        </span>
      </div>
      <div className="flex min-h-0 flex-1 flex-col bg-[#ece9d8]">
        <nav className="flex h-5 shrink-0 items-center gap-3 pb-0.5 pl-1">
          <span className="-mr-1.5"><Drawing /></span>
          {CAD_MENU.map(([t, h]) => <button key={h} className="whitespace-nowrap"><Label text={t} hot={h} /></button>)}
        </nav>
        <nav className="flex h-5 shrink-0 items-center gap-3 pb-0.5 pl-1.5">
          {CAD_MENU2.map(([t, h]) => <button key={h} className="whitespace-nowrap"><Label text={t} hot={h} /></button>)}
          {["_钢_", "_结_", "_构_"].map((t) => <button key={t}>{t}</button>)}
          <span className="ml-auto flex gap-px pr-px">
            {[["最小化", "M3 10h5v2H3z"], ["还原", "M5 3h8v7h-2V5H5zM3 6h7v7H3zm1 2v4h5V8z"], ["关闭", "M3 4l1.500-1L8 6l3.500-3L13 4 9.500 7.500 13 11l-1.500 1L8 9l-3.500 3L3 11l3.500-3.500z"]].map(([n, d]) => (
              <button key={n} aria-label={n} className="border-r border-b border-[#dcd9c8] bg-[#f4f2e8]"><svg viewBox="0 0 16 16" className="h-4 w-4"><path d={d} fill="#555" fillRule="evenodd" /></svg></button>
            ))}
          </span>
        </nav>
        <Bar><Tools items="new open save | print preview publish globe | cut copy paste brush match | undo v redo v | pan zoom zoomwin zoomprev | props grid tools sheet markup calc | help" /></Bar>
        <Bar>
          <Tools items="layers" />
          <Select name="图层" value="WZ" className="w-[300px]">
            {["bulb", "sun", "sunvp", "lock"].map((n) => <Icon key={n} name={n} className="mr-0.5 h-[15px] w-[15px]" />)}
            <i className="h-2.5 w-2.5 border border-black bg-[#00f0f0]" />
          </Select>
          <Tools items="layerSet layerPrev layerState /" />
          <Select name="颜色" value="ByLayer" className="w-[150px]"><i className="ml-0.5 h-2.5 w-2.5 border border-black bg-[#00f0f0]" /></Select>
          <span className="w-[7px] shrink-0" />
          <Select name="线型" value="ByLayer" className="w-[150px]"><i className="ml-0.5 h-px w-[60px] bg-black" /></Select>
        </Bar>
        <Bar><Tools items="cross wave | eq slash gap | hatch arch / lineC rings pent squig ctr | crossC leader hexa beam arrowL | panel / shelf roof book | dimR | fork | find | roof2" /></Bar>
        <Bar><Tools items="line thick red pale gdash cdash | step brk bars | offs ang ang2 | comb eq | star dash / seg lshape | snapE snapM snapX snapA snapD | snapC snapQ snapT" /></Bar>
        <div className="flex min-h-0 flex-1">
          <SideTools items={DRAW_TOOLS} className="w-[26px]" />
          <div className="flex min-w-0 flex-1 flex-col border-t border-l-2 border-[#8a8778]">
            <div className="flex min-h-0 flex-1">
              <div className="min-w-0 flex-1 bg-black"><Model /></div>
              <div className="flex w-[17px] shrink-0 flex-col items-center justify-between bg-[#f5f4ee] py-0.5">
                <Arrow dir="up" />
                <span className="flex h-[15px] w-[15px] flex-col justify-center gap-px rounded-sm border border-[#98b0e8] bg-[#c8d6fb] px-[3px]">{[0, 1, 2, 3].map((i) => <i key={i} className="h-px bg-[#8ca4e0]" />)}</span>
                <Arrow dir="down" />
              </div>
            </div>
            <div className="flex h-[15px] shrink-0">
              {["M3 2v9M11 2L6 6.500l5 4.500z", "M9 2L4 6.500 9 11z", "M5 2l5 4.500L5 11z", "M4 2l5 4.500L4 11zM11 2v9"].map((d) => (
                <button key={d} aria-label="翻页" className="w-3.5 border-r border-b border-[#aca899]"><svg viewBox="0 0 14 13" className="h-[13px] w-[13px]"><path d={d} fill="#aca899" stroke="#aca899" /></svg></button>
              ))}
              <button className="w-[45px] bg-black leading-[14px] text-white [clip-path:polygon(0_0,100%_0,88%_100%,12%_100%)]">模型</button>
              <button className="relative w-[45px] text-center leading-[14px]">布局1
                <svg viewBox="0 0 50 15" className="absolute top-0 left-0 h-[15px] w-[50px]" aria-hidden="true"><path d="M0 6l4 8h38l6-14" fill="none" stroke="#8a8778" /></svg>
              </button>
              <div className="ml-auto flex w-[200px] items-center justify-between border-l border-[#aca899] bg-[#f5f4ee] pl-1">
                <Arrow dir="left" className="h-3.5 w-4" />
                <span className="flex h-3.5 w-4 justify-center gap-px rounded-sm border border-[#98b0e8] bg-[#c8d6fb] py-[3px]">{[0, 1, 2, 3].map((i) => <i key={i} className="w-px bg-[#8ca4e0]" />)}</span>
                <Arrow dir="right" className="h-3.5 w-4" />
              </div>
              <span className="w-[17px]" />
            </div>
          </div>
          <SideTools items={MODIFY_TOOLS} className="w-7" />
        </div>
        <div className="mt-[2px] h-[6px] shrink-0 border-t-2 border-white border-b border-b-black" />
        <div className="flex h-[37px] shrink-0 items-center border-b border-[#8a8778] pt-1 pr-[25px]">
          <Grip />
          <label htmlFor="command" className="flex h-6 items-center border-t-2 border-l-2 border-black bg-white pl-0.5 text-[14px]">命令：</label>
          <input id="command" className="h-6 min-w-0 flex-1 border-t-2 border-black bg-white outline-none" />
        </div>
        <div className="flex h-[21px] shrink-0 items-center gap-1 overflow-hidden pl-1.5">
          <span className="w-[105px] shrink-0 whitespace-nowrap">英科宇机械CAD2014</span>
          <span className="h-[18px] w-[204px] shrink-0 whitespace-pre border border-r-white border-b-white border-[#aca899] pl-px leading-4">783.6582,  -605.3518, 0.0000</span>
          {SNAPS.map(([t, on]) => (
            <button key={t} aria-pressed={on} className={(on ? "border-black border-r-white border-b-white" : "border-white border-r-[#8a8778] border-b-[#8a8778]") + " h-[18px] shrink-0 border px-px leading-4"}>{t}</button>
          ))}
        </div>
      </div>
    </section>
  );
}

function ImeBar() {
  return (
    <div className="absolute top-[744px] right-0 flex h-[24px] w-[186px] items-center justify-between border border-[#b8cbe0] bg-white pr-1 pl-[22px] text-[#2d74b8]">
      <SBadge className="absolute -top-1 left-0 h-7 w-7 -rotate-6" />
      <svg viewBox="0 0 16 16" className="ml-3 h-4 w-4"><path d="M2 4.500h12v5H2zM8 1v14" fill="none" stroke="currentColor" strokeWidth="2" /></svg>
      <svg viewBox="0 0 16 16" className="h-4 w-4"><path d="M9 1q8 4 5 9-4 6-12 4 6-1 7-5 1-4 0-8z" fill="currentColor" /></svg>
      <svg viewBox="0 0 16 16" className="h-4 w-4"><circle cx="5" cy="5" r="2" fill="none" stroke="currentColor" strokeWidth="1.300" /><path d="M10 8q4-1 4 2 0 3-3 4 1-2 0-3-2-1-1-3z" fill="currentColor" /></svg>
      <svg viewBox="0 0 16 16" className="h-4 w-4"><path d="M0 2h16v12H0z" fill="currentColor" /><path d="M2 5h12M2 8h12" stroke="#fff" strokeWidth="1.500" strokeDasharray="1.500 1" /><path d="M4 11.500h8" stroke="#fff" strokeWidth="1.300" /></svg>
      <svg viewBox="0 0 16 16" className="h-4 w-4"><circle cx="8" cy="4" r="3" fill="#b4bccb" /><path d="M2 11q6-7 12 0l-3 3H5z" fill="#b4bccb" /></svg>
      <svg viewBox="0 0 16 16" className="h-4 w-4"><path d="M1 4l4-2q3 2 6 0l4 2-1 4h-2v6H4V8H2z" fill="currentColor" /></svg>
      <svg viewBox="0 0 16 16" className="h-4 w-4"><path d="M2 14l7-7" stroke="currentColor" strokeWidth="3" /><path d="M14 4l-3 2-2-2 2-3q-5 0-4 5t5 3 3-5z" fill="currentColor" /></svg>
    </div>
  );
}

function Taskbar() {
  const tasks: [React.ReactNode, string, boolean][] = [
    [<Cloud />, "360云盘", false],
    [<svg viewBox="0 0 16 16" className="h-4 w-4 shrink-0"><circle cx="8" cy="8" r="7.500" fill="#e8f3fc" /><path d="M12 4Q5 2 5 6q7 3 6 5-2 3-7 1" fill="none" stroke="#2c78c8" strokeWidth="2" /></svg>, "DTII皮带机图纸H...", false],
    [<Folder />, "C:\\Documents and...", false],
    [<Gear />, "机械工程师CAD201...", true],
  ];
  return (
    <footer className="flex h-[30px] shrink-0 items-stretch text-white [background:linear-gradient(#1f52c0,#4a90f0_8%,#2a62dc_20%,#2458d4_85%,#1c44a8)]">
      <button className="flex w-24 items-center gap-1 rounded-r-[10px] pb-0.5 pl-2 text-[19px] italic [background:linear-gradient(#2f7a2f,#5cb45a_12%,#3c9a3c_30%,#379237_80%,#25702a)]">
        <Flag className="h-5 w-[22px]" />开始
      </button>
      <div className="flex w-[102px] items-center gap-[5px] pl-3">
        <Cloud /><Penguin />
        <svg viewBox="0 0 16 16" className="h-4 w-4 shrink-0"><path d="M.500.500h15v15H.500z" fill="#2f86dc" stroke="#fff" /><circle cx="7" cy="7" r="4" fill="none" stroke="#fff" strokeWidth="1.300" /><path d="M10 10l4 4" stroke="#fff" strokeWidth="1.500" /></svg>
        <span className="-mt-3 ml-1.5">»</span>
      </div>
      <div className="flex min-w-0 gap-0.5 pt-[3px] pb-0.5">
        {tasks.map(([icon, t, on]) => (
          <button key={t} className={(on ? "bg-[#1e4cb0] shadow-inner" : "bg-[#3c81f0]") + " flex w-[158px] items-center gap-1 rounded-[3px] border border-[#2c60c8] pl-2 whitespace-nowrap"}>{icon}{t}</button>
        ))}
      </div>
      <div className="ml-auto flex items-center gap-2 pr-[18px]">
        <SBadge />
        <span className="h-4 w-3.5 border border-black bg-[#fdf8d8] text-center text-[12px] leading-[14px] font-bold text-black">?</span>
        <svg viewBox="0 0 12 20" className="h-5 w-3"><path d="M4 2h6v4H4zM2 4.500h6v4H2z" fill="#2458d4" stroke="#fff" /><path d="M3 14h6l-3 3z" fill="#fff" /></svg>
      </div>
      <div className="flex w-[148px] items-center gap-0.5 border-l border-[#0a3c9c] pl-2 [background:linear-gradient(#1070d0,#28b0f8_10%,#1298ea_30%,#1090e4_85%,#0c68b8)]">
        <Penguin /><Cloud />
        <svg viewBox="0 0 16 16" className="h-4 w-4 shrink-0"><path d="M1 3h8v7H1zM4 11h3v3H4z" fill="#2c4468" stroke="#b8ccdc" /><path d="M11 4q2 3 0 6M13 2q3 5 0 9" fill="none" stroke="#fff" /></svg>
        <svg viewBox="0 0 16 16" className="h-4 w-4 shrink-0"><path d="M0 1h16v13H0z" fill="#2f78d8" stroke="#dfeefc" /><path d="M4 5h5M5 11q6 2 7-7M4 8l4 3" fill="none" stroke="#fff" strokeWidth="1.800" /></svg>
        <svg viewBox="0 0 16 16" className="h-4 w-4 shrink-0"><circle cx="7" cy="7" r="5.500" fill="#b8bcc0" stroke="#555" /><circle cx="7" cy="7" r="2.500" fill="#444" /><path d="M11 12q3-2 2-6" fill="none" stroke="#ccc" /></svg>
        <time className="ml-[3px]">10:18</time>
      </div>
    </footer>
  );
}

export default function App() {
  return (
    <div className="relative flex h-screen flex-col overflow-hidden bg-white text-[12px] leading-4 text-black [font-family:'Noto_Sans_Mono_CJK_SC','DejaVu_Sans_Mono','Noto_Sans_CJK_SC',monospace]">
      <ExplorerChrome />
      <main className="flex min-h-0 flex-1">
        <Sidebar />
        <FileList />
      </main>
      <Taskbar />
      <CadWindow />
      <ImeBar />
    </div>
  );
}
